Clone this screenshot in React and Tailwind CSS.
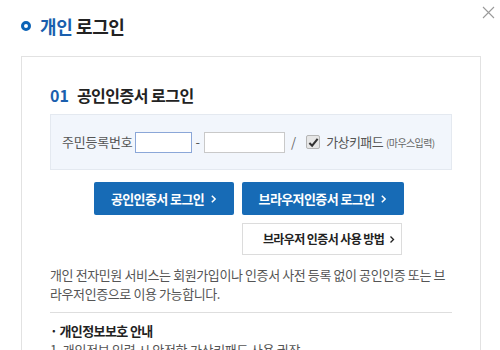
import React from "react";

const Chevron = ({ className }) => (
  <svg viewBox="0 0 8 12" className={className} fill="none" stroke="currentColor" strokeWidth="1.8">
    <path d="M2 2l4 4-4 4" />
  </svg>
);

export default function App() {
  return (
    <div
      className="relative w-[500px] h-[350px] overflow-hidden bg-white text-[#333]"
      style={{ fontFamily: '"Noto Sans CJK KR", "Noto Sans", sans-serif' }}
    >
      {/* close */}
      <button className="absolute top-[6px] right-[5px] w-[13px] h-[13px] text-[#9a9a9a]">
        <svg viewBox="0 0 13 13" className="w-[13px] h-[13px]" stroke="currentColor" strokeWidth="1.1">
          <path d="M1 1l11 11M12 1L1 12" />
        </svg>
      </button>

      {/* header */}
      <div className="flex items-center h-[26px] mt-[13px] pl-[21px] gap-[9px]">
        <span className="w-[10px] h-[10px] rounded-full border-[3px] border-[#0b63b6]" />
        <h1 className="text-[18px] font-bold tracking-[-0.4px] leading-none">
          <span className="text-[#1a5fae]">개인</span> <span className="text-[#222]">로그인</span>
        </h1>
      </div>

      {/* panel */}
      <div className="ml-[21px] mt-[17px] w-[460px] h-[400px] border border-[#e2e2e2] px-[28px] pt-[28px]">
        <h2 className="flex items-center h-[20px] text-[16px] font-bold tracking-[-0.5px] leading-none text-[#222]">
          <span className="text-[#1a5fae] mr-[8px] tracking-normal">01</span>
          공인인증서 로그인
        </h2>

        <div className="mt-[9px] w-[402px] h-[56px] bg-[#f2f6fc] border border-[#e4e9f0] flex items-center pl-[11px] text-[13px]">
          <span className="text-[#555] tracking-[-0.2px]">주민등록번호</span>
          <input className="ml-[2px] w-[57px] h-[21px] bg-white border border-[#8ba7d8] outline-none" />
          <span className="mx-[4px] text-[#555]">-</span>
          <input className="w-[81px] h-[21px] bg-white border border-[#c9c9c9] outline-none" />
          <span className="ml-[6px] text-[#666]">/</span>
          <span className="ml-[10px] w-[14px] h-[14px] rounded-[2px] border border-[#b5b5b5] bg-[#e6e6e6] flex items-center justify-center">
            <svg viewBox="0 0 12 12" className="w-[11px] h-[11px]">
              <path d="M1.5 6.5l3 3 6-7.5" fill="none" stroke="#333" strokeWidth="2.2" />
            </svg>
          </span>
          <span className="ml-[6px] text-[#555] tracking-[-0.6px]">가상키패드</span>
          <span className="ml-[3px] text-[10px] text-[#666] tracking-[-0.6px]">(마우스입력)</span>
        </div>

        <div className="mt-[12px] flex justify-center gap-[8px] pr-[4px]">
          <button className="w-[140px] h-[33px] rounded-[2px] bg-[#176bb6] text-white text-[13px] font-bold tracking-[-0.6px] flex items-center justify-center gap-[6px]">
            공인인증서 로그인
            <Chevron className="w-[7px] h-[10px]" />
          </button>
          <button className="w-[162px] h-[33px] rounded-[2px] bg-[#176bb6] text-white text-[13px] font-bold tracking-[-0.6px] flex items-center justify-center gap-[6px]">
            브라우저인증서 로그인
            <Chevron className="w-[7px] h-[10px]" />
          </button>
        </div>

        <div className="mt-[8px] flex justify-end pr-[50px]">
          <button className="w-[160px] h-[32px] border border-[#dcdcdc] bg-white text-[#222] text-[12px] font-bold tracking-[-0.6px] flex items-center justify-center gap-[5px] pl-[14px]">
            브라우저 인증서 사용 방법
            <Chevron className="w-[6px] h-[9px]" />
          </button>
        </div>

        <p className="mt-[10px] text-[13px] leading-[19px] text-[#555] tracking-[-0.4px]">
          개인 전자민원 서비스는 회원가입이나 인증서 사전 등록 없이 공인인증 또는 브
          <br />
          라우저인증으로 이용 가능합니다.
        </p>

        <div className="mt-[9px] w-[402px] border-t border-[#dedede]" />

        <h3 className="mt-[9px] text-[13px] font-bold leading-[18px] text-[#222] tracking-[-0.6px]">· 개인정보보호 안내</h3>
        <p className="text-[13px] leading-[19px] text-[#555] tracking-[-0.3px]">1. 개인정보 입력 시 안전한 가상키패드 사용 권장</p>
      </div>
    </div>
  );
}
